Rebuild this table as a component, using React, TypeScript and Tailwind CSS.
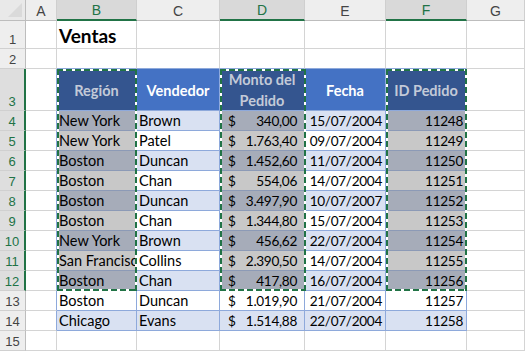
import React from 'react';

const COLS = ['A', 'B', 'C', 'D', 'E', 'F', 'G'];
const SEL_COLS = ['B', 'D', 'F'];

const rows: [string, string, string, string, string][] = [
  ['New York', 'Brown', '340,00', '15/07/2004', '11248'],
  ['New York', 'Patel', '1.763,40', '09/07/2004', '11249'],
  ['Boston', 'Duncan', '1.452,60', '11/07/2004', '11250'],
  ['Boston', 'Chan', '554,06', '14/07/2004', '11251'],
  ['Boston', 'Duncan', '3.497,90', '10/07/2007', '11252'],
  ['Boston', 'Chan', '1.344,80', '15/07/2004', '11253'],
  ['New York', 'Brown', '456,62', '22/07/2004', '11254'],
  ['San Francisco', 'Collins', '2.390,50', '14/07/2004', '11255'],
  ['Boston', 'Chan', '417,80', '16/07/2004', '11256'],
  ['Boston', 'Duncan', '1.019,90', '21/07/2004', '11257'],
  ['Chicago', 'Evans', '1.514,88', '22/07/2004', '11258'],
];

const headers: Record<string, string> = {
  B: 'Región',
  C: 'Vendedor',
  D: 'Monto del Pedido',
  E: 'Fecha',
  F: 'ID Pedido',
};

const rowHeights = [28, 20, 42, 20, 20, 20, 20, 20, 20, 20, 20, 20, 20, 20, 20];

// marching-ants selection box
const Marquee: React.FC<{ className: string }> = ({ className }) => (
  <div className={`absolute pointer-events-none ${className}`}>
    <div className="absolute left-0 right-0 top-0 h-[2px] bg-[repeating-linear-gradient(90deg,#217346_0px,#217346_6px,#ffffff_6px,#ffffff_9px)]" />
    <div className="absolute left-0 right-0 bottom-0 h-[2px] bg-[repeating-linear-gradient(90deg,#217346_0px,#217346_6px,#ffffff_6px,#ffffff_9px)]" />
    <div className="absolute top-0 bottom-0 left-0 w-[2px] bg-[repeating-linear-gradient(180deg,#217346_0px,#217346_6px,#ffffff_6px,#ffffff_9px)]" />
    <div className="absolute top-0 bottom-0 right-0 w-[2px] bg-[repeating-linear-gradient(180deg,#217346_0px,#217346_6px,#ffffff_6px,#ffffff_9px)]" />
  </div>
);

function bodyCell(r: number, col: string) {
  const data = rows[r - 4];
  const sel = SEL_COLS.includes(col) && r <= 12;
  const band = (r - 4) % 2 === 0;
  let bg = '';
  if (sel) bg = band ? 'bg-[#A6ACB9]' : 'bg-[#C8C8C8]';
  else bg = band ? 'bg-[#D9E1F2]' : 'bg-white';
  const border = sel ? 'border-[#8C9AB6]' : 'border-[#8EA9DB]';
  const base = `${bg} border-r border-b ${border} h-full flex items-end pb-[1px] leading-[16px] whitespace-nowrap overflow-hidden text-black`;
  const num = 'text-[13.6px] tracking-[-0.3px]';

  if (col === 'B') return <div className={`${base} pl-[2px]`}>{data[0]}</div>;
  if (col === 'C') return <div className={`${base} pl-[2px]`}>{data[1]}</div>;
  if (col === 'D')
    return (
      <div className={`${base} ${num} pl-[8px] pr-[7px] justify-between`}>
        <span>$</span>
        <span>{data[2]}</span>
      </div>
    );
  if (col === 'E') return <div className={`${base} ${num} justify-end pr-[3px]`}>{data[3]}</div>;
  return <div className={`${base} ${num} justify-end pr-[3px]`}>{data[4]}</div>;
}

function cell(r: number, col: string) {
  const inTable = r >= 3 && r <= 14;
  if (r === 1 && col === 'B')
    return (
      <div className="border-r border-b border-[#D4D4D4] h-full flex items-end pl-[2px] pb-[2px] leading-[20px] text-[19px] font-bold text-black whitespace-nowrap">
        Ventas
      </div>
    );
  if (r === 3 && headers[col]) {
    const sel = SEL_COLS.includes(col);
    return (
      <div
        className={`${sel ? 'bg-[#34558F] text-[#C3CAD8]' : 'bg-[#4472C4] text-white'} border-r border-b border-[#8EA9DB] h-full flex items-center justify-center text-center font-bold leading-[21px] px-[6px] pt-[1px]`}
      >
        {headers[col]}
      </div>
    );
  }
  if (inTable && r >= 4 && headers[col]) return bodyCell(r, col);

  // empty cells
  let rb = 'border-r-[#D4D4D4]';
  if (col === 'A' && inTable) rb = 'border-r-[#8EA9DB]';
  if (col === 'F' && r >= 13 && r <= 14) rb = 'border-r-[#8EA9DB]';
  let bb = 'border-b-[#D4D4D4]';
  if (r === 2 && headers[col]) bb = 'border-b-[#8EA9DB]';
  return <div className={`border-r border-b ${rb} ${bb} h-full`} />;
}

export default function App() {
  return (
    <div className="relative w-[525px] h-[352px] overflow-hidden bg-white font-['Lato','Liberation_Sans',sans-serif] text-[14.5px]">
      <div className="grid grid-cols-[26px_31px_80px_83px_85px_81px_81px_1fr] grid-rows-[21px_28px_20px_42px_repeat(12,20px)]">
        {/* column header row */}
        <div className="bg-[#E9E9E9] border-r border-b border-[#BDBDBD] relative">
          <svg className="absolute right-[3px] bottom-[3px]" width="14" height="14" viewBox="0 0 14 14">
            <polygon points="14,0 14,14 0,14" fill="#DADADA" />
          </svg>
        </div>
        {COLS.map((c) => {
          const sel = SEL_COLS.includes(c);
          return (
            <div
              key={c}
              className={`${sel ? 'bg-[#D9D9D9] text-[#217346] border-b-2 border-b-[#217346]' : 'bg-[#EEEEEE] text-[#444444] border-b border-b-[#BDBDBD]'} border-r border-r-[#CFCFCF] flex items-center justify-center pt-[2px] font-['Liberation_Sans',sans-serif] text-[14px]`}
            >
              {c}
            </div>
          );
        })}

        {rowHeights.map((_, i) => {
          const r = i + 1;
          const sel = r >= 3 && r <= 12;
          return (
            <React.Fragment key={r}>
              <div
                className={`${sel ? 'bg-[#DEDEDE] text-[#217346] border-r-2 border-r-[#217346]' : 'bg-[#EEEEEE] text-[#444444] border-r border-r-[#BDBDBD]'} border-b border-b-[#D0D0D0] flex items-end justify-center font-['Liberation_Sans',sans-serif] text-[13px] leading-[16px]`}
              >
                {r}
              </div>
              {COLS.map((c) => (
                <div key={c} className="min-w-0 overflow-hidden">
                  {cell(r, c)}
                </div>
              ))}
            </React.Fragment>
          );
        })}
      </div>

      <Marquee className="left-[57px] top-[69px] w-[80px] h-[222px]" />
      <Marquee className="left-[220px] top-[69px] w-[86px] h-[222px]" />
      <Marquee className="left-[386px] top-[69px] w-[81px] h-[222px]" />
    </div>
  );
}
